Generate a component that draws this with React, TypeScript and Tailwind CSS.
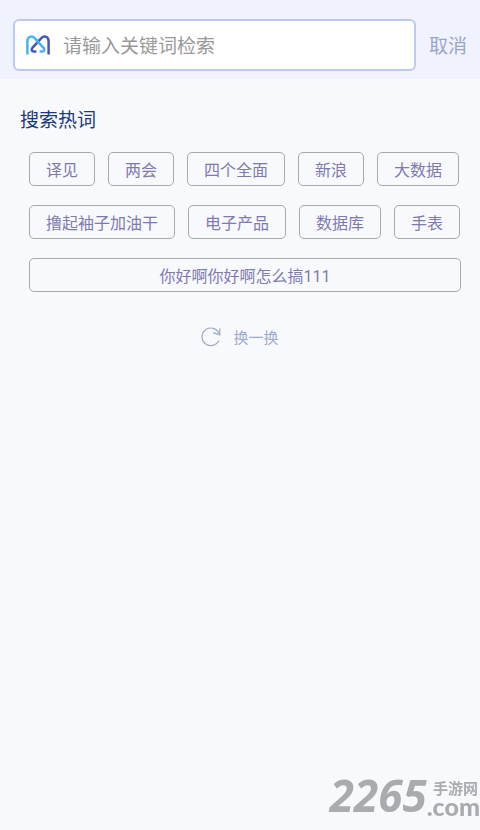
import React, { useState } from 'react';

const HOT_WORDS = [
  '译见',
  '两会',
  '四个全面',
  '新浪',
  '大数据',
  '撸起袖子加油干',
  '电子产品',
  '数据库',
  '手表',
  '你好啊你好啊怎么搞111',
];

const Logo: React.FC = () => (
  <svg width="24" height="20" viewBox="0 0 24 20" fill="none" strokeWidth="2.5" aria-hidden="true" className="shrink-0">
    <path d="M22.6 19.5V6.5C22.6 3 20.7 1.4 18.5 1.4C16 1.4 14.2 4.3 12 6.8L6.6 12.6C5 14.6 5.6 16.6 7.8 16.6H10.4" stroke="#4a55b0" />
    <path d="M1.4 19.5V6.5C1.4 3 3.3 1.4 5.5 1.4C8 1.4 9.8 4.3 12 6.8L17.4 12.6C19 14.6 18.4 16.6 16.2 16.6H13.6" stroke="#45b5ea" />
  </svg>
);

const RefreshIcon: React.FC = () => (
  <svg width="20" height="20" viewBox="0 0 20 20" fill="none" stroke="currentColor" strokeWidth="1.2" aria-hidden="true" className="shrink-0">
    <path d="M17.8 13.5A8.8 8.8 0 1 1 18.3 7.6" />
    <path d="M18.8 1.2V7.8L12.2 5.6" />
  </svg>
);

const Watermark: React.FC = () => (
  <div className="fixed bottom-3.5 right-0 flex items-end text-[#a9abae] pointer-events-none">
    <span className="font-['Noto_Sans',sans-serif] text-[44px] leading-[42px] font-bold italic">2265</span>
    <span className="flex flex-col items-end">
      <span className="pr-0.5 font-['Noto_Sans_CJK_SC',sans-serif] text-[15px] leading-4 font-bold">手游网</span>
      <span className="font-['Lato',sans-serif] text-[25px] leading-5 font-black">.com</span>
    </span>
  </div>
);

export default function App() {
  const [keyword, setKeyword] = useState('');

  return (
    <div className="min-h-screen bg-[#f7f9fd] font-[Roboto,'Noto_Sans_CJK_SC',sans-serif]">
      <header className="flex items-center bg-[#f0f3fd] pt-[19px] pb-2 pl-[13px] pr-[13px]">
        <label className="flex h-[52px] min-w-0 flex-1 items-center gap-[13px] rounded-md border-2 border-[#bfc9ec] bg-white pl-[11px] pr-3">
          <Logo />
          <input
            type="text"
            aria-label="请输入关键词检索"
            placeholder="请输入关键词检索"
            value={keyword}
            onChange={(e) => setKeyword(e.target.value)}
            className="min-w-0 flex-1 bg-transparent pt-1 text-[19px] leading-7 text-[#666666] outline-none placeholder:text-[#999999]"
          />
        </label>
        <button type="button" onClick={() => setKeyword('')} className="ml-[13px] shrink-0 pt-1 text-[19px] leading-7 text-[#9ba5cb]">
          取消
        </button>
      </header>

      <main className="pt-7">
        <h2 className="pl-5 text-[19px] leading-7 text-[#1c3a78]">搜索热词</h2>

        <div className="mt-[17px] ml-[29px] mr-[19px] flex flex-wrap gap-x-[13px] gap-y-[19px]">
          {HOT_WORDS.map((word) => (
            <button
              key={word}
              type="button"
              onClick={() => setKeyword(word)}
              className="h-[34px] rounded-[5px] border border-[#a9a9ac] px-4 pt-[3px] text-base text-[#8179ae] last:w-full"
            >
              {word}
            </button>
          ))}
        </div>

        <div className="mt-8 flex justify-center">
          <button type="button" className="flex items-center gap-3 text-[15px] leading-6 text-[#a0aacb]">
            <RefreshIcon />
            <span className="pt-0.5">换一换</span>
          </button>
        </div>
      </main>

      <Watermark />
    </div>
  );
}
